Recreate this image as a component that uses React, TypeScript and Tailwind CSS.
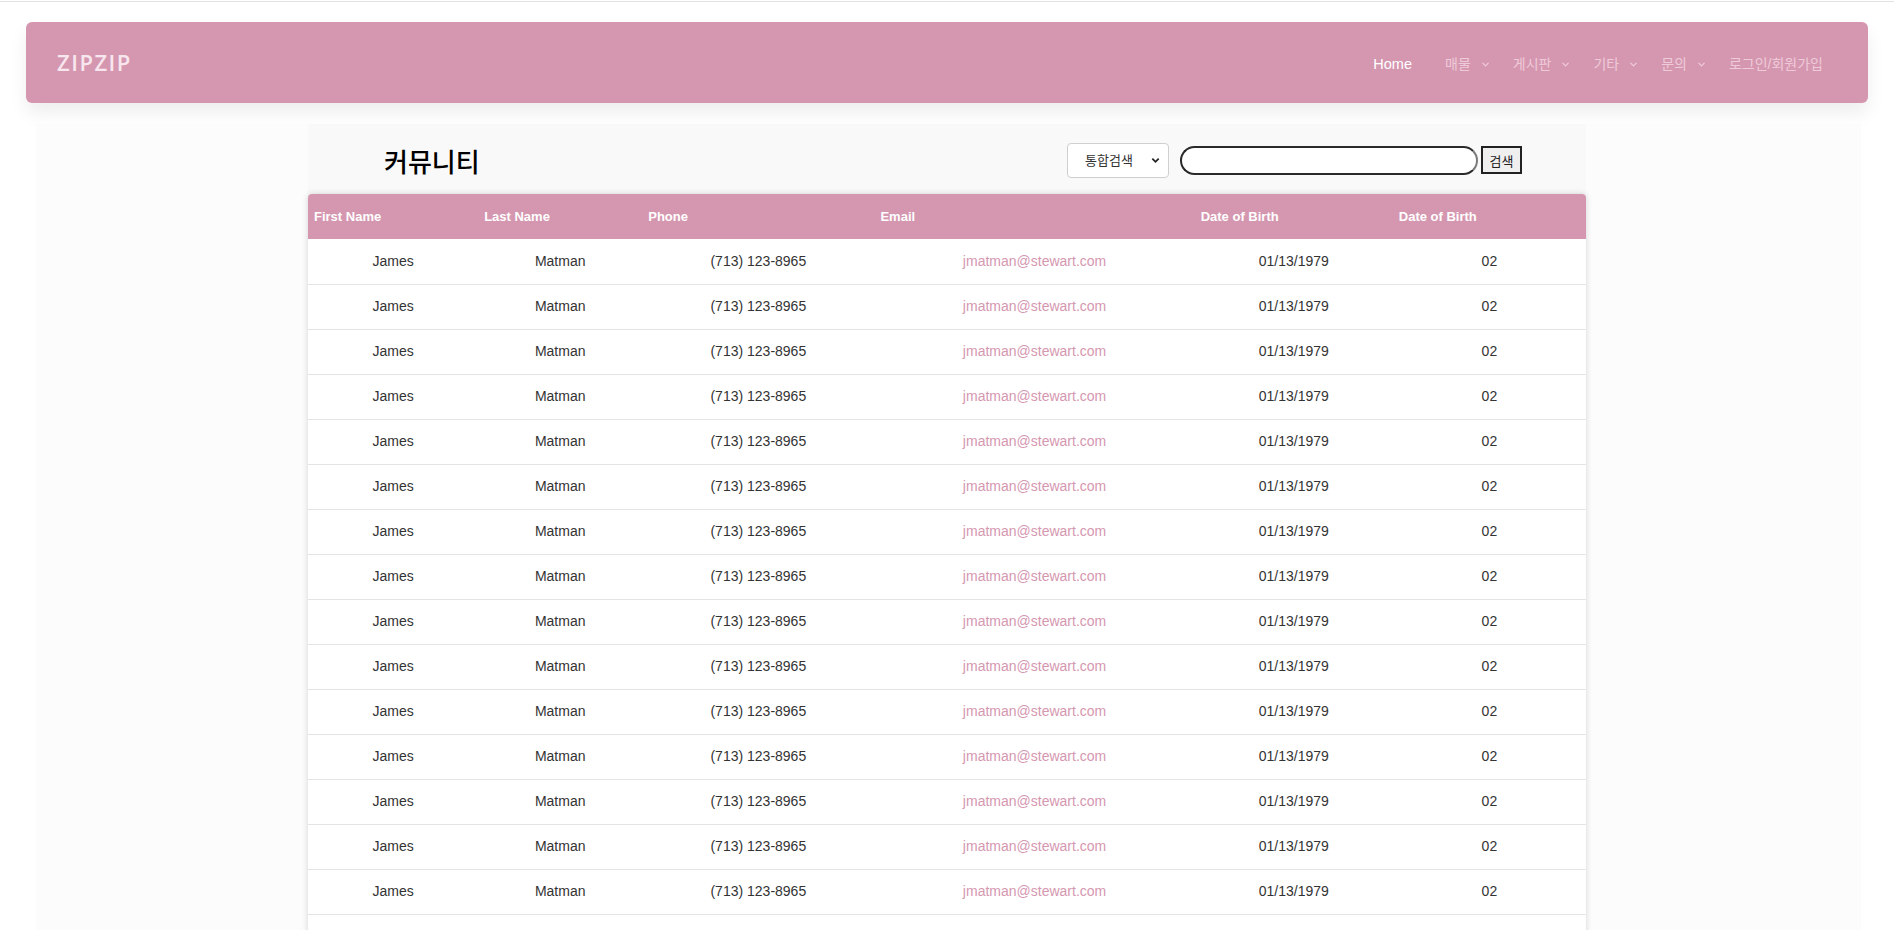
import { ChevronDown } from "lucide-react";

const NAV = [
  { label: "Home", active: true, menu: false },
  { label: "매물", active: false, menu: true },
  { label: "게시판", active: false, menu: true },
  { label: "기타", active: false, menu: true },
  { label: "문의", active: false, menu: true },
  { label: "로그인/회원가입", active: false, menu: false },
];

const COLS = [
  { title: "First Name", w: "w-[170px]" },
  { title: "Last Name", w: "w-[164px]" },
  { title: "Phone", w: "w-[232px]" },
  { title: "Email", w: "w-[320px]" },
  { title: "Date of Birth", w: "w-[198px]" },
  { title: "Date of Birth", w: "w-[193px]" },
];

const rows = Array.from({ length: 20 }, () => ({
  first: "James",
  last: "Matman",
  phone: "(713) 123-8965",
  email: "jmatman@stewart.com",
  birth: "01/13/1979",
  code: "02",
}));

function Navbar() {
  return (
    <header className="mx-[26px] mt-[20px] flex h-[81px] items-center justify-between rounded-[6px] bg-[#d597b0] pl-[31px] pr-[45px] shadow-[0_10px_18px_rgba(0,0,0,0.07)]">
      <a className="font-['Open_Sans',sans-serif] text-[22px] font-semibold tracking-[1.5px] text-[#f7e6ee]">
        ZIPZIP
      </a>
      <nav className="flex items-center gap-[22px] pt-[4px] font-['Liberation_Sans','Noto_Sans_CJK_KR',sans-serif] text-[14px]">
        {NAV.map((item) => (
          <a
            key={item.label}
            className={
              item.active
                ? "mr-[11px] flex items-center text-[14.5px] text-white"
                : "flex items-center text-[#efcad9]"
            }
          >
            {item.label}
            {item.menu ? <ChevronDown className="ml-[9px] h-[11px] w-[11px]" strokeWidth={2.8} /> : null}
          </a>
        ))}
      </nav>
    </header>
  );
}

function SearchBar() {
  return (
    <div className="flex items-center font-['Noto_Sans_CJK_KR',sans-serif]">
      <div className="relative">
        <select className="h-[35px] w-[102px] appearance-none rounded-[4px] border border-[#cfcfcf] bg-white pl-[17px] text-[13px] text-[#333] outline-none">
          <option>통합검색</option>
        </select>
        <svg
          className="pointer-events-none absolute right-[9px] top-1/2 h-[9px] w-[9px] -translate-y-1/2"
          viewBox="0 0 10 10"
          fill="none"
          stroke="#222"
          strokeWidth="2"
        >
          <path d="M1.5 3.5 L5 7 L8.5 3.5" />
        </svg>
      </div>
      <input
        type="text"
        className="ml-[11px] h-[29px] w-[298px] rounded-full border-2 border-[#2a2a2a] border-r-[#7a7a7a] bg-white px-3 text-[13px] outline-none"
      />
      <button
        type="button"
        className="ml-[3px] h-[28px] w-[41px] border-2 border-[#222] bg-[#efefef] text-[13px] leading-none text-[#222]"
      >
        검색
      </button>
    </div>
  );
}

function DataTable() {
  return (
    <div className="overflow-hidden rounded-t-[4px] bg-white shadow-[0_0_6px_rgba(0,0,0,0.16)]">
      <table className="w-full table-fixed border-collapse font-['Liberation_Sans','Noto_Sans_CJK_KR',sans-serif]">
        <thead>
          <tr className="h-[45px] bg-[#d597b0]">
            {COLS.map((c, i) => (
              <th key={i} className={`${c.w} pl-[6px] text-left text-[13px] font-bold text-white`}>
                {c.title}
              </th>
            ))}
          </tr>
        </thead>
        <tbody>
          {rows.map((r, i) => (
            <tr key={i} className="h-[45px] border-b border-[#e4e4e4] text-center text-[14px] text-[#333]">
              <td>{r.first}</td>
              <td>{r.last}</td>
              <td>{r.phone}</td>
              <td className="text-[#d597b0]">{r.email}</td>
              <td>{r.birth}</td>
              <td>{r.code}</td>
            </tr>
          ))}
        </tbody>
      </table>
    </div>
  );
}

export default function App() {
  return (
    <div className="min-h-screen bg-white">
      <div className="h-[2px] border-b border-[#e2e2e2]" />
      <Navbar />
      <main className="ml-[36px] mr-[33px] mt-[21px] bg-[#fcfcfc]">
        <section className="ml-[272px] w-[1278px] bg-[#f9f9f9]">
          <div className="flex h-[70px] items-center justify-between pl-[76px] pr-[64px]">
            <h1 className="pt-[2px] font-['Noto_Sans_CJK_KR',sans-serif] text-[26px] font-medium text-black">
              커뮤니티
            </h1>
            <div className="pt-[2px]">
              <SearchBar />
            </div>
          </div>
          <DataTable />
        </section>
      </main>
    </div>
  );
}
